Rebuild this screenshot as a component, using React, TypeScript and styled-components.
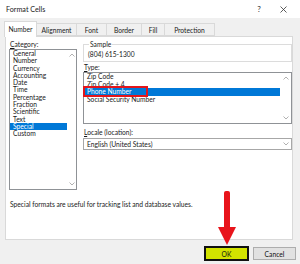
import React from "react";
import styled, { createGlobalStyle } from "styled-components";

const Global = createGlobalStyle`
  html, body { margin: 0; padding: 0; background: #f0f0f0; }
  * { box-sizing: border-box; }
`;

const Window = styled.div`
  position: relative;
  width: 300px;
  height: 264px;
  background: #f0f0f0;
  display: flex;
  flex-direction: column;
  font-family: "Lato", "Noto Sans", sans-serif;
  font-size: 6.7px;
  color: #1a1a1a;
  overflow: hidden;
`;

const TitleBar = styled.div`
  height: 18px;
  background: #ffffff;
  display: flex;
  align-items: center;
  padding: 0 10px 0 6px;
`;

const Title = styled.div`
  flex: 1;
  font-size: 7.2px;
  color: #222;
`;

const TitleButton = styled.div<{ $w: number; $ml?: number }>`
  width: ${(p) => p.$w}px;
  margin-left: ${(p) => p.$ml ?? 0}px;
  display: flex;
  justify-content: center;
  align-items: center;
  font-size: 8px;
  color: #333;
`;

const TabRow = styled.div`
  margin-top: 3px;
  height: 15px;
  padding-left: 4px;
  display: flex;
  align-items: flex-end;
  position: relative;
  z-index: 1;
`;

const Tab = styled.div<{ $w: number; $active?: boolean }>`
  width: ${(p) => p.$w}px;
  height: ${(p) => (p.$active ? 16 : 13)}px;
  margin-bottom: ${(p) => (p.$active ? -1 : 0)}px;
  margin-left: ${(p) => (p.$active ? 0 : -1)}px;
  background: ${(p) => (p.$active ? "#ffffff" : "#f0f0f0")};
  border: 1px solid #d9d9d9;
  border-bottom: ${(p) => (p.$active ? "none" : "1px solid #d9d9d9")};
  display: flex;
  align-items: center;
  justify-content: center;
  padding-bottom: ${(p) => (p.$active ? 1 : 0)}px;
  color: #222;
  &:first-child { margin-left: 0; }
`;

const Panel = styled.div`
  margin: 0 7px 0 5px;
  height: 204px;
  background: #ffffff;
  border: 1px solid #d9d9d9;
  padding: 3px 0 0 3px;
  display: flex;
  flex-direction: column;
`;

const Columns = styled.div`
  display: flex;
  gap: 6px;
`;

const LeftCol = styled.div`
  width: 68px;
  display: flex;
  flex-direction: column;
`;

const RightCol = styled.div`
  width: 209px;
  display: flex;
  flex-direction: column;
`;

const Label = styled.div<{ $mt?: number }>`
  height: 9px;
  line-height: 9px;
  margin-top: ${(p) => p.$mt ?? 0}px;
  padding-left: 1px;
  u { text-decoration-thickness: 0.5px; text-underline-offset: 1px; }
`;

const ListBox = styled.div<{ $h: number }>`
  position: relative;
  height: ${(p) => p.$h}px;
  border: 1px solid #8f9296;
  display: flex;
  background: #fff;
`;

const Items = styled.div`
  flex: 1;
  display: flex;
  flex-direction: column;
`;

const Item = styled.div<{ $h: number; $sel?: boolean }>`
  height: ${(p) => p.$h}px;
  line-height: ${(p) => p.$h}px;
  padding-left: 3px;
  white-space: nowrap;
  background: ${(p) => (p.$sel ? "#0078d7" : "transparent")};
  color: ${(p) => (p.$sel ? "#ffffff" : "#1a1a1a")};
`;

const ScrollBar = styled.div<{ $w: number }>`
  width: ${(p) => p.$w}px;
  display: flex;
  flex-direction: column;
  justify-content: space-between;
  align-items: center;
  padding: 3px 0;
`;

const SampleGroup = styled.fieldset`
  margin: 0;
  height: 22px;
  padding: 2px 0 0 4px;
  border: 1px solid #dcdcdc;
  min-width: 0;
  legend {
    padding: 0 1px;
    margin-left: 1px;
    height: 8px;
    line-height: 8px;
  }
`;

const SampleText = styled.div`
  height: 8px;
  line-height: 8px;
`;

const Combo = styled.div`
  margin-top: 1px;
  height: 12px;
  border: 1px solid #a7a7a7;
  display: flex;
  align-items: center;
  padding-left: 3px;
`;

const ComboText = styled.div`
  flex: 1;
`;

const ComboButton = styled.div`
  width: 11px;
  height: 100%;
  display: flex;
  align-items: center;
  justify-content: center;
`;

const Description = styled.div`
  margin-top: 10px;
  height: 9px;
  line-height: 9px;
  padding-left: 1px;
`;

const Highlight = styled.div`
  position: absolute;
  left: -1px;
  top: 13px;
  width: 65px;
  height: 11px;
  border: 2px solid #e3161b;
  pointer-events: none;
`;

const ButtonRow = styled.div`
  margin-top: 6px;
  display: flex;
  justify-content: flex-end;
  align-items: center;
  gap: 4px;
  padding-right: 4px;
`;

const Button = styled.div<{ $primary?: boolean }>`
  width: ${(p) => (p.$primary ? 45 : 43)}px;
  height: ${(p) => (p.$primary ? 15 : 13)}px;
  display: flex;
  align-items: center;
  justify-content: center;
  background: ${(p) => (p.$primary ? "#d2e300" : "#e1e1e1")};
  border: ${(p) => (p.$primary ? "2px solid #111" : "1px solid #adadad")};
  color: #111;
`;

const Arrow = styled.svg`
  position: absolute;
  left: 217px;
  top: 191px;
`;

const Chevron = ({ up }: { up?: boolean }) => (
  <svg width="6" height="4" viewBox="0 0 6 4">
    <polyline
      points={up ? "0.5,3.5 3,1 5.5,3.5" : "0.5,0.5 3,3 5.5,0.5"}
      fill="none"
      stroke="#a8a8a8"
      strokeWidth="0.9"
    />
  </svg>
);

const categories = [
  "General",
  "Number",
  "Currency",
  "Accounting",
  "Date",
  "Time",
  "Percentage",
  "Fraction",
  "Scientific",
  "Text",
  "Special",
  "Custom",
];

const types = ["Zip Code", "Zip Code + 4", "Phone Number", "Social Security Number"];

const tabs: [string, number][] = [
  ["Number", 33],
  ["Alignment", 41],
  ["Font", 31],
  ["Border", 36],
  ["Fill", 24],
  ["Protection", 51],
];

export default function App() {
  return (
    <>
      <Global />
      <Window>
        <TitleBar>
          <Title>Format Cells</Title>
          <TitleButton $w={12}>?</TitleButton>
          <TitleButton $w={14} $ml={11}>
            <svg width="7" height="7" viewBox="0 0 7 7">
              <path d="M0.5 0.5 L6.5 6.5 M6.5 0.5 L0.5 6.5" stroke="#333" strokeWidth="0.8" />
            </svg>
          </TitleButton>
        </TitleBar>
        <TabRow>
          {tabs.map(([t, w], i) => (
            <Tab key={t} $w={w} $active={i === 0}>
              {t}
            </Tab>
          ))}
        </TabRow>
        <Panel>
          <Columns>
            <LeftCol>
              <Label>
                <u>C</u>ategory:
              </Label>
              <ListBox $h={141}>
                <Items>
                  {categories.map((c) => (
                    <Item key={c} $h={7.3} $sel={c === "Special"}>
                      {c}
                    </Item>
                  ))}
                </Items>
                <ScrollBar $w={9}>
                  <Chevron up />
                  <Chevron />
                </ScrollBar>
              </ListBox>
            </LeftCol>
            <RightCol>
              <SampleGroup>
                <legend>Sample</legend>
                <SampleText>(804) 615-1300</SampleText>
              </SampleGroup>
              <Label $mt={1}>
                <u>T</u>ype:
              </Label>
              <ListBox $h={52}>
                <Items>
                  {types.map((t) => (
                    <Item key={t} $h={7.5} $sel={t === "Phone Number"}>
                      {t}
                    </Item>
                  ))}
                </Items>
                <ScrollBar $w={11}>
                  <Chevron up />
                  <Chevron />
                </ScrollBar>
                <Highlight />
              </ListBox>
              <Label $mt={4}>
                <u>L</u>ocale (location):
              </Label>
              <Combo>
                <ComboText>English (United States)</ComboText>
                <ComboButton>
                  <Chevron />
                </ComboButton>
              </Combo>
            </RightCol>
          </Columns>
          <Description>Special formats are useful for tracking list and database values.</Description>
        </Panel>
        <ButtonRow>
          <Button $primary>OK</Button>
          <Button>Cancel</Button>
        </ButtonRow>
        <Arrow width="20" height="55" viewBox="0 0 20 55">
          <rect x="7" y="0" width="6" height="38" rx="2" fill="#e8141b" />
          <polygon points="1,36 19,36 10,54" fill="#e8141b" />
        </Arrow>
      </Window>
    </>
  );
}
